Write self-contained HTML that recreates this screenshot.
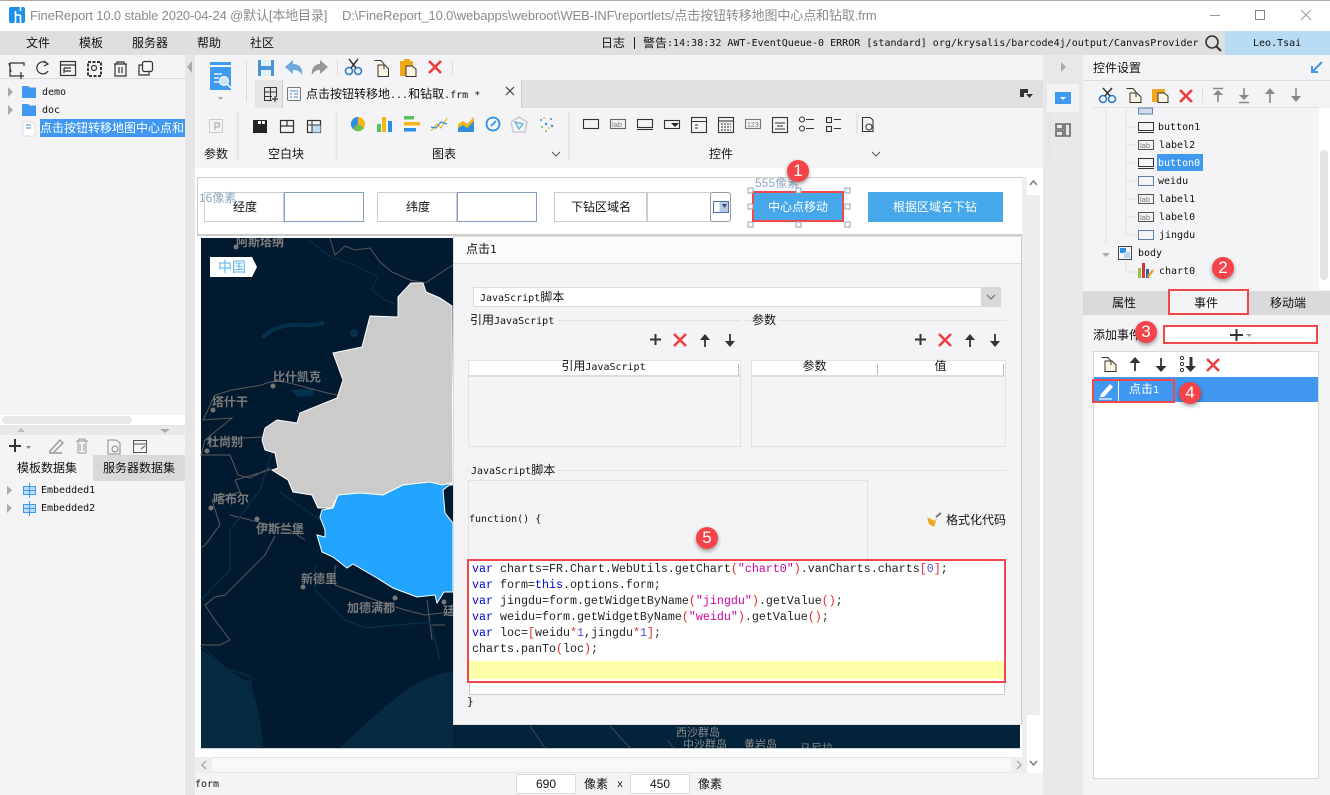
<!DOCTYPE html>
<html lang="zh"><head><meta charset="utf-8"><title>FineReport</title>
<style>
html,body{margin:0;padding:0;width:1330px;height:795px;overflow:hidden;background:#f4f4f7}
body{position:relative;font:12px/16px "Liberation Sans","Noto Sans CJK SC",sans-serif;color:#111}
.b,.t{position:absolute;box-sizing:border-box}
.t{white-space:nowrap;line-height:16px}
.m{font-family:"DejaVu Sans Mono","Liberation Mono","Noto Sans CJK SC",monospace;font-size:10px}
.t.m{margin-top:1px}
.c{text-align:center}
svg{position:absolute;left:0;top:0;overflow:visible}
svg text{font-family:"Liberation Sans",sans-serif;stroke:none}
.code{font-family:"Liberation Mono",monospace;font-size:11.67px;color:#222}
.code b{font-weight:400;color:#0000d8}.code s{text-decoration:none;color:#e8262c}.code u{text-decoration:none;color:#d000a0}.code em{font-style:normal;color:#5050e0}
.n{font-size:17px;color:#fff}
.ml{color:#7b7b7b;font-weight:700;font-size:12px}
</style></head><body>
<!-- background blocks -->
<div class="b" style="left:0;top:0;width:1330px;height:31px;background:#fff;border-top:1px solid #aaa"></div>
<div class="b" style="left:0;top:31px;width:1330px;height:24px;background:#dfdfe2"></div>
<div class="b" style="left:1225px;top:31px;width:105px;height:24px;background:#b7dbf2"></div>
<div class="b" style="left:185px;top:55px;width:10px;height:740px;background:#e6e6e6"></div>
<div class="b" style="left:0;top:78px;width:185px;height:1px;background:#dcdcdc"></div>
<div class="b" style="left:0;top:415px;width:185px;height:10px;background:#fff"></div>
<div class="b" style="left:2px;top:416px;width:130px;height:8px;background:#e8e8e8;border-radius:4px"></div>
<div class="b" style="left:0;top:425px;width:185px;height:10px;background:#e9e9ec"></div>
<div class="b" style="left:93px;top:455px;width:92px;height:26px;background:#d9d9dc"></div>
<div class="b" style="left:255px;top:80px;width:788px;height:28px;background:#e0e0e3"></div>
<div class="b" style="left:255px;top:80px;width:27px;height:28px;background:#e6e6e9"></div>
<div class="b" style="left:282px;top:80px;width:240px;height:28px;background:#f4f4f7;border-left:1px solid #ccc;border-right:1px solid #ccc"></div>
<div class="b" style="left:195px;top:168px;width:848px;height:605px;background:#fff"></div>
<div class="b" style="left:1043px;top:55px;width:40px;height:740px;background:#e8e8e8"></div>
<div class="b" style="left:1047px;top:84px;width:32px;height:28px;background:#f4f4f7"></div>
<div class="b" style="left:1083px;top:80px;width:247px;height:1px;background:#dcdcdc"></div>
<div class="b" style="left:1093px;top:107px;width:226px;height:1px;background:#e2e2e2"></div>
<div class="b" style="left:1319px;top:108px;width:11px;height:182px;background:#fff"></div>
<div class="b" style="left:1320px;top:150px;width:8px;height:130px;background:#e4e4e6;border-radius:4px"></div>
<div class="b" style="left:1083px;top:291px;width:247px;height:24px;background:#d9d9dc"></div>
<div class="b" style="left:1168px;top:289px;width:81px;height:26px;background:#f4f4f7;border:2px solid #f0474a"></div>
<div class="b" style="left:1163px;top:325px;width:155px;height:19px;background:#fff;border:2px solid #f0474a"></div>
<div class="b" style="left:1093px;top:351px;width:226px;height:428px;background:#fff;border:1px solid #d8d8d8"></div>
<div class="b" style="left:1094px;top:377px;width:224px;height:25px;background:#4098f0"></div>
<div class="b" style="left:1092px;top:379px;width:83px;height:24px;border:2px solid #f0474a"></div>
<div class="b" style="left:1118px;top:381px;width:1px;height:20px;background:#fff"></div>

<!-- canvas -->
<div class="b" style="left:197px;top:177px;width:827px;height:59px;border:1px solid #ccc;border-bottom:2px solid #ccc;background:#fff"></div>
<div class="b" style="left:204px;top:192px;width:80px;height:30px;border:1px solid #ccc"></div>
<div class="b" style="left:284px;top:192px;width:80px;height:30px;border:1px solid #829fc2"></div>
<div class="b" style="left:377px;top:192px;width:80px;height:30px;border:1px solid #ccc"></div>
<div class="b" style="left:457px;top:192px;width:80px;height:30px;border:1px solid #829fc2"></div>
<div class="b" style="left:554px;top:192px;width:93px;height:30px;border:1px solid #ccc"></div>
<div class="b" style="left:647px;top:192px;width:64px;height:30px;border:1px solid #ccc"></div>
<div class="b" style="left:710px;top:192px;width:21px;height:30px;border:1px solid #999;border-radius:3px;background:#fff"></div>
<div class="b" style="left:713px;top:201px;width:16px;height:12px;border:1px solid #4f6fa5;background:linear-gradient(90deg,#fff 40%,#b8c9e3 40%)"></div>
<div class="b" style="left:752px;top:191px;width:92px;height:31px;background:#46a7ea;border:2px solid #f0474a"></div>
<div class="b" style="left:868px;top:192px;width:135px;height:30px;background:#46a7ea"></div>

<!-- map -->
<div class="b" style="left:199px;top:238px;width:821px;height:511px;background:#021a30;border-left:2px solid #fff;border-bottom:1px solid #ccc;overflow:hidden"></div>
<svg width="1330" height="795" viewBox="0 0 1330 795">
<path d="M201 650 C225 665 245 685 250 680 C255 700 262 720 263 748 L201 748Z M340 748 C375 715 420 670 455 672 L455 748Z" fill="#052a42"/>
<path d="M201 645 L225 668 L250 676 L252 698 L262 748" fill="none" stroke="#06283e" stroke-width="2"/>
<path d="M291 390 L315 388 L313 396 L298 397Z" fill="#05304c"/>
<path d="M262 338 C272 328 285 324 300 325 C310 326 318 324 324 323" fill="none" stroke="#05304c" stroke-width="4"/>
<circle cx="354" cy="333" r="4" fill="#05304c"/>
<path d="M310 240 C320 250 330 258 345 262 C360 266 365 272 378 276 L372 290 L385 300 L395 304" fill="none" stroke="#05304c" stroke-width="1"/>
<path d="M330 238 L335 255 L345 246 L355 250 L370 248 L380 262 L392 272 L410 280 L425 283 L430 280 L445 270 L453 265" fill="none" stroke="#555" stroke-width="1"/>
<path d="M262 385 C280 375 300 388 337 395 M262 385 L232 390 L215 395 L203 420 L232 418 L205 440 L262 437 M205 440 L201 455 L230 455 L238 475 L250 478 L270 468 M235 480 L270 470 M235 480 L240 492 L212 500 L220 525 L205 545 L201 548 M230 515 L290 530 M275 536 L265 555 L240 580 L225 595 L215 597 L205 605 L215 620 L230 640 L220 645 L201 645 M290 530 L305 540 M335 565 L335 585 L375 600 L405 610 L425 615 L450 612 M427 600 L432 640 M430 625 L445 625" fill="none" stroke="#5a5a5a" stroke-width="1"/>
<path d="M272 452 L260 490 L230 530 L230 570 L201 600 M315 565 L315 590 L345 620 L365 628 L430 622 L440 660 M280 492 L320 520" fill="none" stroke="#07314e" stroke-width="1.2"/>
<circle cx="236" cy="247" r="2.5" fill="#777"/><circle cx="273" cy="386" r="2.5" fill="#777"/><circle cx="213" cy="410" r="2.5" fill="#777"/><circle cx="207" cy="451" r="2.5" fill="#777"/><circle cx="211" cy="508" r="2.5" fill="#777"/><circle cx="257" cy="519" r="2.5" fill="#777"/><circle cx="303" cy="587" r="2.5" fill="#777"/><circle cx="395" cy="598" r="2.5" fill="#777"/><circle cx="444" cy="602" r="2.5" fill="#777"/>
<path d="M411 283 L423 283 L426 292 L440 298 L452 306 L453 485 L442 485 L430 482 L403 485 L383 495 L360 493 L338 495 L332 508 L318 508 L312 495 L293 492 L288 480 L272 470 L278 468 L275 453 L265 450 L262 440 L265 428 L277 420 L297 423 L300 413 L337 398 L343 380 L333 353 L362 347 L370 316 L398 317 L398 297Z" fill="#cbcbcb" stroke="#fff" stroke-width="1"/>
<path d="M322 510 L333 508 L338 495 L360 493 L383 495 L403 485 L430 482 L442 485 L452 483 L443 490 L445 513 L453 523 L453 592 L444 592 L437 603 L435 595 L417 597 L393 588 L377 578 L353 564 L347 568 L333 557 L322 552 L317 535 L325 537 L325 530 L320 517Z" fill="#22a4ff" stroke="#fff" stroke-width="1"/>
<path d="M210 257 H252 L257 267 L252 277 H210Z" fill="#fff"/>
<path d="M453 725 H1020 V748 H453Z" fill="#03233a"/>
<path d="M530 726 L545 748 M610 726 L630 748 M668 740 L673 748 M750 740 L748 748" fill="none" stroke="#445" stroke-width="1"/>
</svg>
<span class="t ml" style="left:236px;top:234px;clip-path:inset(4px 0 0 0)">阿斯塔纳</span>
<span class="t ml" style="left:273px;top:369px">比什凯克</span>
<span class="t ml" style="left:212px;top:394px">塔什干</span>
<span class="t ml" style="left:207px;top:434px">杜尚别</span>
<span class="t ml" style="left:213px;top:491px">喀布尔</span>
<span class="t ml" style="left:256px;top:521px">伊斯兰堡</span>
<span class="t ml" style="left:301px;top:571px">新德里</span>
<span class="t ml" style="left:347px;top:600px">加德满都</span>
<span class="t ml" style="left:443px;top:603px">廷布</span>
<div class="b" style="left:453px;top:725px;width:567px;height:23px;overflow:hidden">
<span class="t ml" style="left:223px;top:0;font-size:11px;font-weight:400;color:#8a8a8a">西沙群岛</span>
<span class="t ml" style="left:230px;top:12px;font-size:11px;font-weight:400;color:#8a8a8a">中沙群岛</span>
<span class="t ml" style="left:291px;top:12px;font-size:11px;font-weight:400;color:#8a8a8a">黄岩岛</span>
<span class="t ml" style="left:347px;top:16px;font-size:11px;font-weight:400;color:#8a8a8a">马尼拉</span>
</div>
<div class="t" style="left:218px;top:259px;color:#5cb3ee;font-size:14px">中国</div>

<!-- dialog -->
<div class="b" style="left:453px;top:236px;width:570px;height:489px;background:#f4f4f7;border:1px solid #ddd;border-right:2px solid #ccc"></div>
<div class="b" style="left:454px;top:237px;width:567px;height:27px;background:#fbfbfb;border-bottom:1px solid #ddd"></div>
<div class="t" style="left:466px;top:241px">点击<span class="m" style="font-size:11px">1</span></div>
<div class="b" style="left:473px;top:287px;width:528px;height:20px;background:#fff;border:1px solid #ddd"></div>
<div class="b" style="left:981px;top:287px;width:20px;height:20px;background:#d8d8db"></div>
<div class="t" style="left:480px;top:289px"><span class="m">JavaScript</span>脚本</div>
<div class="b" style="left:466px;top:320px;width:275px;height:1px;background:#e4e4e6"></div>
<div class="b" style="left:744px;top:320px;width:263px;height:1px;background:#e4e4e6"></div>
<div class="t" style="left:470px;top:312px;background:#f4f4f7;padding-right:2px">引用<span class="m">JavaScript</span></div>
<div class="t" style="left:752px;top:312px;background:#f4f4f7;padding-right:2px">参数</div>
<div class="b" style="left:468px;top:360px;width:273px;height:87px;border:1px solid #e2e2e2"></div>
<div class="b" style="left:751px;top:360px;width:255px;height:87px;border:1px solid #e2e2e2"></div>
<div class="b" style="left:469px;top:361px;width:271px;height:16px;background:#fff;border-bottom:2px solid #ddd"></div>
<div class="b" style="left:752px;top:361px;width:253px;height:16px;background:#fff;border-bottom:2px solid #ddd"></div>
<div class="b" style="left:738px;top:364px;width:1px;height:11px;background:#bbb"></div>
<div class="b" style="left:877px;top:364px;width:1px;height:11px;background:#bbb"></div>
<div class="b" style="left:1003px;top:364px;width:1px;height:11px;background:#bbb"></div>
<div class="t c" style="left:469px;top:358px;width:269px">引用<span class="m">JavaScript</span></div>
<div class="t c" style="left:752px;top:358px;width:125px">参数</div>
<div class="t c" style="left:878px;top:358px;width:125px">值</div>
<div class="b" style="left:466px;top:470px;width:541px;height:1px;background:#e4e4e6"></div>
<div class="t" style="left:471px;top:462px;background:#f4f4f7;padding-right:2px"><span class="m">JavaScript</span>脚本</div>
<div class="b" style="left:468px;top:480px;width:400px;height:80px;border:1px solid #e2e2e2;border-bottom:0"></div>
<div class="t m" style="left:469px;top:511px">function() {</div>
<div class="t" style="left:946px;top:512px">格式化代码</div>
<div class="b" style="left:469px;top:682px;width:536px;height:13px;background:#fff;border:1px solid #ccc;border-top:0"></div>
<div class="t m" style="left:467px;top:693px;font-size:11px">}</div>
<div class="b" style="left:467px;top:559px;width:539px;height:124px;background:#fff;border:2px solid #f0474a"></div>
<div class="b" style="left:469px;top:661px;width:535px;height:18px;background:#ffffaa"></div>
<div class="t code" style="left:472px;top:561px"><b>var</b> charts=FR.Chart.WebUtils.getChart<s>(</s><u>"chart0"</u><s>)</s>.vanCharts.charts<s>[</s><em>0</em><s>]</s>;</div>
<div class="t code" style="left:472px;top:577px"><b>var</b> form=<b>this</b>.options.form;</div>
<div class="t code" style="left:472px;top:593px"><b>var</b> jingdu=form.getWidgetByName<s>(</s><u>"jingdu"</u><s>)</s>.getValue<s>()</s>;</div>
<div class="t code" style="left:472px;top:609px"><b>var</b> weidu=form.getWidgetByName<s>(</s><u>"weidu"</u><s>)</s>.getValue<s>()</s>;</div>
<div class="t code" style="left:472px;top:625px"><b>var</b> loc=<s>[</s>weidu<s>*</s><em>1</em>,jingdu<s>*</s><em>1</em><s>]</s>;</div>
<div class="t code" style="left:472px;top:641px">charts.panTo<s>(</s>loc<s>)</s>;</div>

<!-- canvas scrollbars & status -->
<div class="b" style="left:1022px;top:177px;width:18px;height:595px;background:#eee"></div>
<div class="b" style="left:1027px;top:177px;width:13px;height:18px;background:#fff"></div>
<div class="b" style="left:1027px;top:715px;width:13px;height:57px;background:#fff"></div>
<div class="b" style="left:195px;top:757px;width:832px;height:16px;background:#f8f8f8;border-top:1px solid #e4e4e4;border-bottom:1px solid #e4e4e4"></div>
<div class="b" style="left:195px;top:757px;width:17px;height:16px;background:#eee"></div>
<div class="b" style="left:1011px;top:757px;width:16px;height:16px;background:#eee"></div>
<div class="b" style="left:195px;top:773px;width:848px;height:22px;background:#f4f4f7"></div>
<div class="t m" style="left:195px;top:776px">form</div>
<div class="b" style="left:516px;top:774px;width:60px;height:20px;background:#fff;border:1px solid #ddd"></div>
<div class="b" style="left:630px;top:774px;width:60px;height:20px;background:#fff;border:1px solid #ddd"></div>
<div class="t c" style="left:516px;top:776px;width:60px">690</div>
<div class="t c" style="left:630px;top:776px;width:60px">450</div>
<div class="t" style="left:584px;top:776px">像素</div>
<div class="t m" style="left:617px;top:776px">x</div>
<div class="t" style="left:698px;top:776px">像素</div>

<!-- top texts -->
<div class="t" style="left:30px;top:8px;color:#8a8a8a;font-size:13px;letter-spacing:-.15px">FineReport 10.0 stable 2020-04-24 @默认[本地目录]</div>
<div class="t" style="left:342px;top:8px;color:#8a8a8a;font-size:13px;letter-spacing:-.12px">D:\FineReport_10.0\webapps\webroot\WEB-INF\reportlets/点击按钮转移地图中心点和钻取.frm</div>
<div class="t" style="left:26px;top:35px">文件</div><div class="t" style="left:79px;top:35px">模板</div><div class="t" style="left:132px;top:35px">服务器</div><div class="t" style="left:197px;top:35px">帮助</div><div class="t" style="left:250px;top:35px">社区</div>
<div class="t" style="left:601px;top:35px">日志</div>
<div class="b" style="left:634px;top:37px;width:1px;height:12px;background:#222"></div>
<div class="t" style="left:643px;top:35px">警告</div>
<div class="t m" style="left:667px;top:35px;letter-spacing:.02px">:14:38:32 AWT-EventQueue-0 ERROR [standard] org/krysalis/barcode4j/output/CanvasProvider</div>
<div class="t m" style="left:1253px;top:35px">Leo.Tsai</div>
<div class="t m" style="left:42px;top:84px">demo</div><div class="t m" style="left:42px;top:102px">doc</div>
<div class="b" style="left:40px;top:119px;width:145px;height:18px;background:#4098f0"></div>
<div class="t" style="left:40px;top:120px;color:#fff">点击按钮转移地图中心点和</div>
<div class="t" style="left:17px;top:460px">模板数据集</div><div class="t" style="left:103px;top:460px">服务器数据集</div>
<div class="t m" style="left:41px;top:482px">Embedded1</div><div class="t m" style="left:41px;top:500px">Embedded2</div>
<div class="t" style="left:306px;top:86px">点击按钮转移地<span class="m">...</span>和钻取<span class="m">.frm *</span></div>
<div class="t" style="left:204px;top:146px">参数</div><div class="t" style="left:268px;top:146px">空白块</div><div class="t" style="left:432px;top:146px">图表</div><div class="t" style="left:709px;top:146px">控件</div>
<div class="t" style="left:233px;top:199px">经度</div><div class="t" style="left:406px;top:199px">纬度</div><div class="t" style="left:571px;top:199px">下钻区域名</div>
<div class="t" style="left:199px;top:190px;color:#8fa7c0">16像素</div><div class="t" style="left:755px;top:175px;color:#8fa7c0">555像素</div>
<div class="t" style="left:768px;top:199px;color:#fff">中心点移动</div><div class="t" style="left:893px;top:199px;color:#fff">根据区域名下钻</div>
<div class="t" style="left:1093px;top:60px">控件设置</div>
<div class="t m" style="left:1158px;top:119px">button1</div><div class="t m" style="left:1159px;top:137px">label2</div>
<div class="b" style="left:1157px;top:154px;width:46px;height:17px;background:#4098f0"></div>
<div class="t m" style="left:1158px;top:155px;color:#fff">button0</div>
<div class="t m" style="left:1158px;top:173px">weidu</div><div class="t m" style="left:1159px;top:191px">label1</div><div class="t m" style="left:1159px;top:209px">label0</div><div class="t m" style="left:1159px;top:227px">jingdu</div>
<div class="t m" style="left:1138px;top:245px">body</div><div class="t m" style="left:1159px;top:263px">chart0</div>
<div class="t" style="left:1112px;top:295px">属性</div><div class="t" style="left:1194px;top:295px">事件</div><div class="t" style="left:1270px;top:295px">移动端</div>
<div class="t" style="left:1093px;top:327px">添加事件</div>
<div class="t" style="left:1129px;top:381px;color:#fff">点击<span class="m" style="color:#fff">1</span></div>

<!-- icons -->
<svg width="1330" height="795" viewBox="0 0 1330 795" fill="none">
<!-- logo -->
<rect x="9" y="7" width="16" height="16" rx="2" fill="#1e90e8"/><path d="M15.5 11V23M15.5 15H20.5M20.5 7V11M20.5 15V23" stroke="#fff" stroke-width="1.6"/>
<!-- window ctl -->
<path d="M1210 15.5H1220" stroke="#999"/><rect x="1255.5" y="10.5" width="9" height="9" stroke="#888"/><path d="M1301 10L1311 20M1311 10L1301 20" stroke="#999"/>
<!-- search -->
<circle cx="1212" cy="42" r="6" stroke="#333" stroke-width="1.6"/><path d="M1216.5 46.5L1221 51" stroke="#333" stroke-width="2"/>
<!-- left toolbar -->
<g stroke="#333" stroke-width="1.2">
<path d="M10 63H24V66M10 63V76H20M9 63L11 72M21 72V79M18 76H24"/>
<path d="M47 63.5A6 6 0 1 0 48 71M44 61L48 64L44 66"/>
<rect x="60.5" y="61.5" width="15" height="14"/><path d="M60 65H76M64 68H71M64 71H71M64 68V73"/>
<path d="M88 62H101V76H88Z" stroke-width="2" stroke-dasharray="3 1.5"/><circle cx="94" cy="68" r="2.5"/>
<path d="M114 64H127M117 64V62H124V64M115 64V76H126V64M119 67V73M122 67V73"/>
<rect x="142.5" y="61.5" width="10" height="10" rx="2"/><path d="M142 65H139V75H149V72"/>
</g>
<path d="M8 87L13 92L8 97ZM8 105L13 110L8 115Z" fill="#aaa"/>
<path d="M22 86H28L30 87.5H36V98H22Z M22 104H28L30 105.5H36V116H22Z" fill="#4098f0"/>
<path d="M23 122H32L35 125V136H23Z" fill="#fff" stroke="#ddd"/><path d="M26 125H31M26 128H31" stroke="#4a86c8"/>
<!-- left lower -->
<path d="M15 445V439M9 446H21M15 440V452" stroke="#333" stroke-width="2"/><path d="M26 446H31L28.5 449Z" fill="#888"/>
<path d="M50 451L60 440L63 443L53 453H50ZM49 453H62" stroke="#999" stroke-width="1.4"/><path d="M76 441H88M78 441V453H86V441M80 444V451M84 444V451M79 441V439H85V441" stroke="#999"/>
<path d="M108 440H116L120 443V454H108Z" stroke="#888"/><circle cx="115" cy="449" r="3" stroke="#888"/>
<rect x="133.5" y="440.5" width="13" height="12" stroke="#555"/><path d="M133 444H147M141 449L145 446" stroke="#555"/>
<path d="M17 432H25L21 428Z" fill="#bbb"/><path d="M160 429H170L165 433Z" fill="#aaa"/>
<path d="M7 486L12 490L7 495ZM7 504L12 508L7 513Z" fill="#aaa"/>
<g stroke="#4098f0"><rect x="23.5" y="486.5" width="12" height="8" fill="#bcdcfa"/><path d="M29.5 483V498M23 490.5H36"/><rect x="23.5" y="504.5" width="12" height="8" fill="#bcdcfa"/><path d="M29.5 501V516M23 508.5H36"/></g>
<!-- big doc icon -->
<path d="M210 62H231V65H210Z" fill="#3f9bf2"/><path d="M210 67H231V90H210Z" fill="#3f9bf2"/><path d="M214 74H222M214 78H219M214 82H219" stroke="#fff" stroke-width="1.2"/><circle cx="224" cy="81" r="4.5" fill="#cde3f7" stroke="#fff"/><path d="M227 84L231 88" stroke="#fff" stroke-width="1.5"/>
<path d="M218 97H223L220.5 100Z" fill="#aaa"/><path d="M246.5 61V102" stroke="#ddd"/>
<!-- toolbar top -->
<path d="M258 60H274V76H258Z" fill="#4a94d8"/><path d="M261 60H271V66H261Z M261 70H271V76H261Z" fill="#fff" opacity=".85"/>
<path d="M285 67L293 60V64C300 64 303 69 302 75C300 71 297 70 293 70V74Z" fill="#6fa8dc"/>
<path d="M328 67L320 60V64C314 64 311 69 312 75C314 71 317 70 320 70V74Z" fill="#999"/>
<path d="M337.5 60V75" stroke="#ddd"/>
<circle cx="349" cy="71" r="3.5" stroke="#2e7dc6" stroke-width="1.6"/><circle cx="358" cy="71" r="3.5" stroke="#2e7dc6" stroke-width="1.6"/><path d="M351 68L358 59M356 68L349 59" stroke="#333" stroke-width="1.5"/>
<path d="M374.5 60.5H381L384 64V69M378 65H385L388.5 69V76.5H378Z" stroke="#333" fill="#fdf6e3"/>
<path d="M400 61H413V70H408V76H400Z" fill="#efa81c"/><path d="M404 59H410V62H404Z" fill="#efa81c"/><path d="M406 66H412L416 69V76.5H406Z" fill="#fdf6e3" stroke="#333"/>
<path d="M429 61L441 73M441 61L429 73" stroke="#ee3b3b" stroke-width="2.6"/><path d="M452.5 60V75" stroke="#ddd"/>
<!-- tab icons -->
<path d="M264.5 87.5H276.5V97M264.5 87.5V100.5H272M264 92H277M270.5 87V101M265 96.5H272" stroke="#333"/><path d="M272 99H278M275 96V102" stroke="#333" stroke-width="1.2"/>
<rect x="287.5" y="87.5" width="13" height="13" stroke="#777" rx="1"/><path d="M290 91H298M290 94H292M294 94H298M290 97H292M294 97H298" stroke="#5a8fc8"/>
<path d="M506 87L514 95M514 87L506 95" stroke="#444" stroke-width="1.2"/>
<path d="M1020 89H1028V93H1024V97H1020Z" fill="#333"/><path d="M1026 94H1033L1029.5 98Z" fill="#333"/>
<!-- group dividers -->
<path d="M237.5 111V160M336.5 111V160M569 111V160M857 111V134M1049 111V160" stroke="#e6e6dc" stroke-width="2"/>
<rect x="209.5" y="119.5" width="13" height="13" stroke="#ccc"/><path d="M214 123H218C220 123 220 127 218 127H214M215 123V130" stroke="#bbb" stroke-width="1.4"/>
<rect x="253" y="120" width="14" height="13" fill="#222"/><path d="M258 121H261V124H258ZM262 121H265V124H262Z" fill="#fff"/>
<path d="M280.5 120.5H293.5V132.5H280.5ZM280 126H294M287 120V126" stroke="#333" stroke-width="1.2"/>
<rect x="307.5" y="120.5" width="13" height="12" stroke="#333" stroke-width="1.2"/><path d="M307 125H321M312 120V133" stroke="#333"/><rect x="312.5" y="125.5" width="8" height="7" fill="#bcdcf5"/>
<!-- charts -->
<circle cx="358" cy="124" r="7" fill="#f3b716"/><path d="M358 124V117A7 7 0 0 0 353 129Z" fill="#2e8fe0"/><path d="M358 124L353 129A7 7 0 0 0 364 128Z" fill="#6cc24a"/>
<rect x="377" y="124" width="4" height="8" fill="#5cc05a"/><rect x="382" y="117" width="4" height="15" fill="#f3b716"/><rect x="388" y="121" width="4" height="11" fill="#2e8fe0"/>
<rect x="404" y="116" width="10" height="3.5" fill="#5cc05a"/><rect x="404" y="122" width="16" height="3.5" fill="#f3b716"/><rect x="404" y="128" width="12" height="3.5" fill="#2e8fe0"/>
<path d="M431 131L437 124L441 128L447 118" stroke="#f3b716" stroke-width="1.2"/><path d="M431 127L436 128L441 122L447 124" stroke="#2e8fe0" stroke-width="1.2"/>
<path d="M458 132V124L463 121L467 124L474 117V132Z" fill="#2e8fe0"/><path d="M458 124L463 121L467 124L474 117V121L467 128L463 125L458 128Z" fill="#f3b716"/>
<circle cx="493" cy="124" r="6.5" stroke="#2e8fe0" stroke-width="1.8"/><path d="M491 126L496 121" stroke="#2e8fe0" stroke-width="1.6"/>
<path d="M519 117L527 122L525 132H513L511 122Z" stroke="#ccc" stroke-width="1.5"/><path d="M515 122L523 124L519 129Z" stroke="#58b7d8" stroke-width="1.3"/>
<g fill="#2e8fe0"><circle cx="541" cy="120" r="1"/><circle cx="546" cy="124" r="1.2"/><circle cx="551" cy="119" r="1"/><circle cx="552" cy="126" r="1.2"/></g><g fill="#f3b716"><circle cx="544" cy="118" r="1"/><circle cx="549" cy="128" r="1"/></g><g fill="#6cc24a"><circle cx="542" cy="127" r="1"/><circle cx="546" cy="131" r="1"/></g>
<path d="M552 152L556 156L560 152M872 152L876 156L880 152" stroke="#555"/>
<!-- widgets -->
<g stroke="#333" stroke-width="1.1">
<rect x="583.5" y="119.5" width="15" height="9"/>
<rect x="610.5" y="119.5" width="15" height="9" stroke="#666"/>
<rect x="637.5" y="119.5" width="15" height="8"/><path d="M637 129.5H653"/>
<rect x="664.5" y="120.5" width="15" height="8"/>
<rect x="691.5" y="117.5" width="15" height="15"/><path d="M691 121.5H707M695 125H698M695 128H698"/>
<rect x="718.5" y="117.5" width="15" height="15"/><path d="M718 121H734"/><path d="M721 124H731M721 127H731M721 130H731" stroke-dasharray="2 1"/>
<rect x="745.5" y="119.5" width="15" height="9" stroke="#777"/>
<rect x="772.5" y="117.5" width="15" height="15"/><path d="M775 123H785M777 126H783M775 129H785"/>
<circle cx="802" cy="119.5" r="2.5"/><circle cx="802" cy="128.5" r="2.5"/><path d="M806 119.5H814M806 128.5H814"/>
<rect x="826.5" y="117.5" width="5" height="5"/><rect x="826.5" y="126.5" width="5" height="5"/><path d="M834 119.5H841M834 128.5H841"/>
<path d="M862.5 117.5H870L873 120V131.5H862.5Z"/><circle cx="869" cy="127" r="3"/>
</g>
<text x="612" y="127" font-size="7.5" fill="#777">lab</text><text x="747" y="127" font-size="7" fill="#777">123</text>
<path d="M671 123H679L675 127Z" fill="#222"/>
<path d="M722 204H727L724.5 208Z" fill="#2d4d85"/>
<path d="M987 295L991 299L995 295" stroke="#666"/>
<!-- center collapse arrows -->
<path d="M192 61L187 67L192 73Z" fill="#aaa"/><path d="M1061 62L1066 67L1061 72Z" fill="#aaa"/>
<rect x="1055" y="92" width="16" height="12" fill="#3f9bf2"/><path d="M1060 97H1066L1063 100Z" fill="#fff"/>
<path d="M1056 124H1063V129H1056ZM1056 131H1063V136H1056ZM1065 124H1070V136H1065Z" stroke="#666" stroke-width="1.6"/>
<path d="M1322 62L1312 72M1312 66V72H1318" stroke="#4098f0" stroke-width="2"/>
<!-- right toolbar -->
<circle cx="1103" cy="99" r="3.5" stroke="#2e7dc6" stroke-width="1.6"/><circle cx="1112" cy="99" r="3.5" stroke="#2e7dc6" stroke-width="1.6"/><path d="M1105 96L1112 88M1110 96L1103 88" stroke="#333" stroke-width="1.5"/>
<path d="M1126.5 88.5H1133L1136 92V97M1130 93H1137L1141 97V102.5H1130Z" stroke="#333" fill="#fdf6e3"/>
<path d="M1152 89H1165V98H1160V102H1152Z" fill="#efa81c"/><path d="M1158 93H1164L1168 96V102.5H1158Z" fill="#fdf6e3" stroke="#333"/>
<path d="M1180 90L1192 102M1192 90L1180 102" stroke="#ee3b3b" stroke-width="2.6"/><path d="M1202.5 88V103" stroke="#ddd"/>
<g stroke="#888" stroke-width="1.6"><path d="M1213 88.5H1223M1218 94V102"/><path d="M1213 95L1218 90L1223 95Z" fill="#888" stroke="none"/><path d="M1239 102.5H1249M1244 88V96"/><path d="M1239 95H1249L1244 100Z" fill="#888" stroke="none"/><path d="M1270 92V103"/><path d="M1265 94L1270 88L1275 94Z" fill="#888" stroke="none"/><path d="M1296 88V98"/><path d="M1291 96H1301L1296 102Z" fill="#888" stroke="none"/></g>
<!-- tree -->
<path d="M1106 108V245M1126 108V235M1126 127H1137M1126 145H1137M1126 163H1137M1126 181H1137M1126 199H1137M1126 217H1137M1126 235H1137M1126 262V272H1137" stroke="#e2e2e2"/>
<rect x="1138.5" y="108" width="14" height="6" stroke="#5e7fb0" fill="#cfdcec"/>
<path d="M1138.5 122.5H1153.5V130.5H1138.5ZM1138 132.5H1154" stroke="#333"/>
<rect x="1138.5" y="140.5" width="15" height="9" stroke="#555"/><text x="1140" y="148" font-size="7.5" fill="#777">lab</text>
<path d="M1138.5 158.5H1153.5V166.5H1138.5ZM1138 168.5H1154" stroke="#333"/>
<rect x="1138.5" y="176.5" width="15" height="9" stroke="#5e7fb0"/>
<rect x="1138.5" y="194.5" width="15" height="9" stroke="#555"/><text x="1140" y="202" font-size="7.5" fill="#777">lab</text>
<rect x="1138.5" y="212.5" width="15" height="9" stroke="#555"/><text x="1140" y="220" font-size="7.5" fill="#777">lab</text>
<rect x="1138.5" y="230.5" width="15" height="9" stroke="#5e7fb0"/>
<path d="M1102 253H1110L1106 257Z" fill="#aaa"/>
<rect x="1118.5" y="246.5" width="13" height="13" stroke="#444"/><rect x="1120" y="248" width="6" height="5" fill="#2e8fe0"/><rect x="1124" y="252" width="6" height="6" fill="#b7d4f0"/>
<rect x="1138" y="268" width="3" height="10" fill="#9ac04a"/><rect x="1142" y="263" width="3" height="15" fill="#d8343a"/><rect x="1146" y="269" width="3" height="9" fill="#1a68b8"/><path d="M1148 277L1153 270" stroke="#efa81c" stroke-width="2.5"/>
<!-- event list tools -->
<path d="M1230 335H1243M1236.5 329V341" stroke="#333" stroke-width="2"/><path d="M1246 334H1252L1249 337Z" fill="#999"/>
<path d="M1101.5 357.5H1108L1111 361V365M1105 361H1112L1116 365V371.5H1105Z" stroke="#333" fill="#fdf6e3"/>
<path d="M1135 359V371" stroke="#333" stroke-width="1.8"/><path d="M1129.5 363L1135 357L1140.5 363Z" fill="#333"/>
<path d="M1161 358V370" stroke="#333" stroke-width="1.8"/><path d="M1155.5 366H1166.5L1161 372Z" fill="#333"/>
<circle cx="1182" cy="358" r="1.6" stroke="#333"/><circle cx="1182" cy="364" r="1.6" stroke="#333"/><circle cx="1182" cy="370" r="1.6" stroke="#333"/>
<path d="M1191 357V368" stroke="#333" stroke-width="3"/><path d="M1185 366H1196L1190.5 372Z" fill="#333"/>
<path d="M1207 359L1219 371M1219 359L1207 371" stroke="#ee3b3b" stroke-width="2.4"/>
<path d="M1101 394L1110 384L1113 387L1104 397H1100Z" fill="#fff"/><path d="M1099 399H1112" stroke="#fff" stroke-width="1.2"/>
<!-- dialog tools -->
<g><path d="M650 339.5H661M655.5 334V345" stroke="#333" stroke-width="2"/><path d="M674 334L686 346M686 334L674 346" stroke="#ee3b3b" stroke-width="2.4"/><path d="M705 337V347" stroke="#333" stroke-width="1.8"/><path d="M700 340L705 334L710 340Z" fill="#333"/><path d="M730 334V344" stroke="#333" stroke-width="1.8"/><path d="M725 341H735L730 347Z" fill="#333"/></g>
<g transform="translate(265)"><path d="M650 339.5H661M655.5 334V345" stroke="#333" stroke-width="2"/><path d="M674 334L686 346M686 334L674 346" stroke="#ee3b3b" stroke-width="2.4"/><path d="M705 337V347" stroke="#333" stroke-width="1.8"/><path d="M700 340L705 334L710 340Z" fill="#333"/><path d="M730 334V344" stroke="#333" stroke-width="1.8"/><path d="M725 341H735L730 347Z" fill="#333"/></g>
<path d="M927 517L935 521L938 514L934 527L929 524Z" fill="#efa81c"/><path d="M936 517L941 513" stroke="#777" stroke-width="2"/>
<!-- scroll arrows -->
<path d="M1030 185L1033.5 181L1037 185" stroke="#777" stroke-width="1.4"/><path d="M1030 761L1033.5 765L1037 761" stroke="#777" stroke-width="1.4"/><path d="M206 761L202 765L206 769" stroke="#aaa" stroke-width="1.4"/><path d="M1017 761L1021 765L1017 769" stroke="#aaa" stroke-width="1.4"/>
<!-- selection handles -->
<g fill="#fff" stroke="#8aa4c0"><rect x="748" y="188" width="5" height="5"/><rect x="796" y="188" width="5" height="5"/><rect x="845" y="188" width="5" height="5"/><rect x="748" y="204" width="5" height="5"/><rect x="845" y="204" width="5" height="5"/><rect x="748" y="222" width="5" height="5"/><rect x="796" y="222" width="5" height="5"/><rect x="845" y="222" width="5" height="5"/></g>
<!-- numbered badges -->
<g fill="#f4444a" style="filter:drop-shadow(0 2px 2px rgba(0,0,0,.4))"><circle cx="798" cy="171" r="11"/><circle cx="1223" cy="268" r="11"/><circle cx="1146" cy="332" r="11"/><circle cx="1190" cy="393" r="11"/><circle cx="707" cy="538" r="11"/></g>
</svg>
<div class="t n c" style="left:787px;top:163px;width:22px">1</div>
<div class="t n c" style="left:1212px;top:260px;width:22px">2</div>
<div class="t n c" style="left:1135px;top:324px;width:22px">3</div>
<div class="t n c" style="left:1179px;top:385px;width:22px">4</div>
<div class="t n c" style="left:696px;top:530px;width:22px">5</div>
</body></html>
